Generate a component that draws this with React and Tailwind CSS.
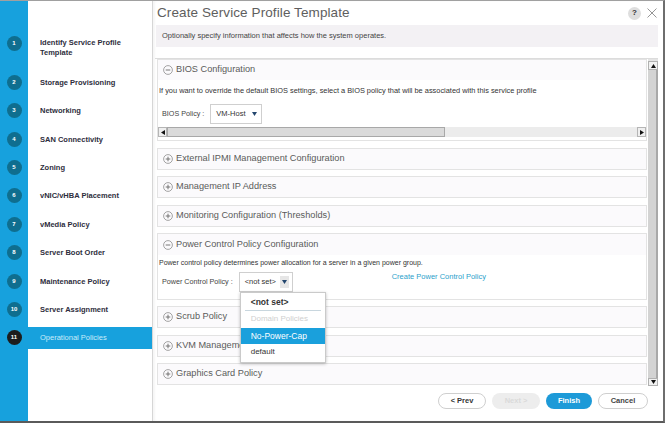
const steps = [
  { n: 1, label: ["Identify Service Profile", "Template"] },
  { n: 2, label: ["Storage Provisioning"] },
  { n: 3, label: ["Networking"] },
  { n: 4, label: ["SAN Connectivity"] },
  { n: 5, label: ["Zoning"] },
  { n: 6, label: ["vNIC/vHBA Placement"] },
  { n: 7, label: ["vMedia Policy"] },
  { n: 8, label: ["Server Boot Order"] },
  { n: 9, label: ["Maintenance Policy"] },
  { n: 10, label: ["Server Assignment"] },
  { n: 11, label: ["Operational Policies"], active: true },
];

function CircleIcon({ plus }) {
  return (
    <svg width="10" height="10" viewBox="0 0 10 10" className="shrink-0">
      <circle cx="5" cy="5" r="4.4" fill="none" stroke="#8d8d8d" strokeWidth="0.8" />
      <line x1="2.7" y1="5" x2="7.3" y2="5" stroke="#6a6a6a" strokeWidth="0.9" />
      {plus && <line x1="5" y1="2.7" x2="5" y2="7.3" stroke="#6a6a6a" strokeWidth="0.9" />}
    </svg>
  );
}

function Tri({ dir = "down", color = "#23466e" }) {
  const pts = {
    down: "0,0 5,0 2.5,4",
    up: "0,4 5,4 2.5,0",
    left: "4,0 4,5 0,2.5",
    right: "0,0 0,5 4,2.5",
  }[dir];
  const w = dir === "left" || dir === "right" ? 4 : 5;
  const h = dir === "left" || dir === "right" ? 5 : 4;
  return (
    <svg width={w} height={h} viewBox={`0 0 ${w} ${h}`} className="shrink-0">
      <polygon points={pts} fill={color} />
    </svg>
  );
}

function Header({ title, plus }) {
  return (
    <div className="h-[20px] flex items-center pl-[5px] gap-[3px] text-[9.2px] text-[#5a5a5a] bg-[#fbfafc]">
      <CircleIcon plus={plus} />
      <span>{title}</span>
    </div>
  );
}

function Collapsed({ title }) {
  return (
    <div className="h-[22px] border border-[#e3e3e3] bg-white">
      <Header title={title} plus />
    </div>
  );
}

export default function App() {
  return (
    <div className="w-[665px] h-[423px] flex overflow-hidden border-t border-t-[#a0a0a0] border-r-2 border-b-2 border-r-[#6e6e6e] border-b-[#5a5a5a] bg-white font-['Liberation_Sans',Arial,sans-serif]">
      {/* Sidebar */}
      <div className="w-[152px] shrink-0 h-full flex flex-col pt-[31px] gap-[6.4px] bg-[linear-gradient(to_right,#17a1dd_28px,#ffffff_28px)]">
        {steps.map((s) =>
          s.n === 1 ? (
            <div key={s.n} className="h-[33px] flex items-start">
              <div className="w-[28px] flex justify-center pt-[3.5px]">
                <div className="w-[15px] h-[15px] rounded-full bg-[#0f6e8f] flex items-center justify-center text-[6px] font-bold text-white">
                  {s.n}
                </div>
              </div>
              <div className="pl-[12px] pt-[6px] text-[7.5px] leading-[10px] font-bold text-[#2d2d3c]">
                <div>{s.label[0]}</div>
                <div>{s.label[1]}</div>
              </div>
            </div>
          ) : (
            <div
              key={s.n}
              className={
                "h-[22px] flex items-center " + (s.active ? "bg-[#17a1dd]" : "")
              }
            >
              <div className="w-[28px] flex justify-center">
                <div
                  className={
                    "w-[15px] h-[15px] rounded-full flex items-center justify-center text-[6px] font-bold text-white " +
                    (s.active ? "bg-[#1c1c1c]" : "bg-[#0f6e8f]")
                  }
                >
                  {s.n}
                </div>
              </div>
              <div
                className={
                  "pl-[12px] text-[7.5px] " +
                  (s.active ? "text-[#c9ecfa]" : "font-bold text-[#2d2d3c]")
                }
              >
                {s.label[0]}
              </div>
            </div>
          )
        )}
      </div>

      {/* Main */}
      <div className="flex-1 h-full flex flex-col border-l border-l-[#d6d6d6] shadow-[inset_2px_0_2px_rgba(0,0,0,0.04)]">
        {/* Title row */}
        <div className="h-[24px] flex items-center pl-[4px] pr-[6px]">
          <div className="text-[13.5px] text-[#5e5e5e] tracking-[0.1px]">Create Service Profile Template</div>
          <div className="ml-auto flex items-center gap-[6px]">
            <div className="w-[13px] h-[13px] rounded-full bg-[#dedede] flex items-center justify-center text-[8px] font-bold text-[#333]">
              ?
            </div>
            <svg width="10" height="10" viewBox="0 0 10 10">
              <line x1="0.5" y1="0.5" x2="9.5" y2="9.5" stroke="#8a8a8a" strokeWidth="0.9" />
              <line x1="9.5" y1="0.5" x2="0.5" y2="9.5" stroke="#8a8a8a" strokeWidth="0.9" />
            </svg>
          </div>
        </div>

        {/* Info bar */}
        <div className="h-[22px] ml-[3px] mr-[5px] bg-[#f3f1f4] flex items-center pl-[6px] text-[7.5px] text-[#444]">
          Optionally specify information that affects how the system operates.
        </div>

        {/* Scroll area */}
        <div className="mt-[11px] ml-[2px] mr-[5px] h-[328px] border-t border-t-[#dcdcdc] flex">
          <div className="flex-1 min-w-0 pl-[2px] pr-[1px] flex flex-col gap-[6.5px] relative">
            {/* BIOS */}
            <div className="border border-[#e3e3e3] flex flex-col pb-[3px]">
              <Header title="BIOS Configuration" />
              <div className="h-[22px] flex items-center pl-[1px] text-[7.4px] text-[#333] whitespace-nowrap">
                If you want to override the default BIOS settings, select a BIOS policy that will be associated with this service profile
              </div>
              <div className="mt-[2px] h-[20px] flex items-center pl-[4px]">
                <span className="text-[7.2px] text-[#444]">BIOS Policy :</span>
                <div className="ml-[6px] w-[52px] h-[20px] border border-[#cfcfcf] bg-white flex items-center pl-[5px] gap-[6px]">
                  <span className="text-[7.5px] text-[#333]">VM-Host</span>
                  <Tri />
                </div>
              </div>
              <div className="mt-[3px] h-[10px] flex bg-[#ececec]">
                <div className="w-[9px] h-full bg-[#efefef] border border-[#b5b5b5] flex items-center justify-center">
                  <Tri dir="left" color="#111" />
                </div>
                <div className="w-[278px] h-full bg-[#dadada] border border-[#a8a8a8]" />
                <div className="flex-1" />
                <div className="w-[9px] h-full bg-[#efefef] border border-[#b5b5b5] flex items-center justify-center">
                  <Tri dir="right" color="#111" />
                </div>
              </div>
            </div>

            <Collapsed title="External IPMI Management Configuration" />
            <Collapsed title="Management IP Address" />
            <Collapsed title="Monitoring Configuration (Thresholds)" />

            {/* Power control */}
            <div className="border border-[#e3e3e3] flex flex-col pb-[6.5px] bg-white">
              <div className="h-[21px] flex items-center pl-[5px] gap-[3px] text-[9.2px] text-[#5a5a5a] bg-[#fbfafc]">
                <CircleIcon />
                <span>Power Control Policy Configuration</span>
              </div>
              <div className="h-[16px] flex items-center pl-[1px] text-[7px] text-[#333] whitespace-nowrap">
                Power control policy determines power allocation for a server in a given power group.
              </div>
              <div className="mt-[1px] h-[20px] flex items-center pl-[4px]">
                <span className="text-[7.2px] text-[#444]">Power Control Policy :</span>
                <div className="relative ml-[6px] w-[54px] h-[20px] border border-[#cfcfcf] bg-white flex items-center pl-[5px]">
                  <span className="text-[7.5px] text-[#333]">&lt;not set&gt;</span>
                  <div className="ml-[4px] w-[9px] h-[12px] bg-[#e6e6e6] flex items-center justify-center">
                    <Tri />
                  </div>
                  {/* Dropdown */}
                  <div className="absolute left-0 top-[19px] w-[86px] z-10 bg-white border border-[#cacaca] shadow-[0_1px_3px_rgba(0,0,0,0.25)] flex flex-col pt-[1px] pb-[2px]">
                    <div className="h-[16px] flex items-center pl-[10px] text-[8.5px] font-bold text-[#333]">&lt;not set&gt;</div>
                    <div className="mx-[4px] h-px bg-[#c8d6de]" />
                    <div className="h-[16px] flex items-center pl-[10px] text-[8px] text-[#cfcfcf]">Domain Policies</div>
                    <div className="mt-[1px] h-[16px] flex items-center pl-[10px] text-[8.5px] text-white bg-[#1aa0dc]">No-Power-Cap</div>
                    <div className="h-[16px] flex items-center pl-[10px] text-[8px] text-[#333]">default</div>
                  </div>
                </div>
                <span className="ml-[99px] self-start mt-[-1px] text-[7.5px] text-[#2b9fcb]">Create Power Control Policy</span>
              </div>
            </div>

            <Collapsed title="Scrub Policy" />
            <Collapsed title="KVM Management Policy" />
            <Collapsed title="Graphics Card Policy" />
          </div>

          {/* Vertical scrollbar */}
          <div className="w-[10px] h-full flex flex-col bg-[#e4e4e4]">
            <div className="h-[9px] mt-[2px] bg-[#f1f1f1] border border-[#b0b0b0] flex items-center justify-center">
              <Tri dir="up" color="#111" />
            </div>
            <div className="flex-1 bg-[#d3d3d3] border-r-2 border-r-[#a8a8a8]" />
            <div className="h-[8px] bg-[#f1f1f1] border border-[#b0b0b0] flex items-center justify-center">
              <Tri dir="down" color="#111" />
            </div>
          </div>
        </div>

        {/* Buttons */}
        <div className="mt-[7px] h-[16px] flex justify-end pr-[15px] gap-[6px]">
          <div className="w-[48px] h-[16px] rounded-full border border-[#cfcfcf] bg-white flex items-center justify-center text-[7.5px] font-bold text-[#333]">
            &lt; Prev
          </div>
          <div className="w-[48px] h-[16px] rounded-full bg-[#ededed] flex items-center justify-center text-[7.5px] font-bold text-[#dadada]">
            Next &gt;
          </div>
          <div className="w-[46px] h-[16px] rounded-full bg-[#1d9ad8] flex items-center justify-center text-[7.5px] font-bold text-white">
            Finish
          </div>
          <div className="w-[50px] h-[16px] rounded-full border border-[#cfcfcf] bg-white flex items-center justify-center text-[7.5px] font-bold text-[#444]">
            Cancel
          </div>
        </div>
      </div>
    </div>
  );
}
